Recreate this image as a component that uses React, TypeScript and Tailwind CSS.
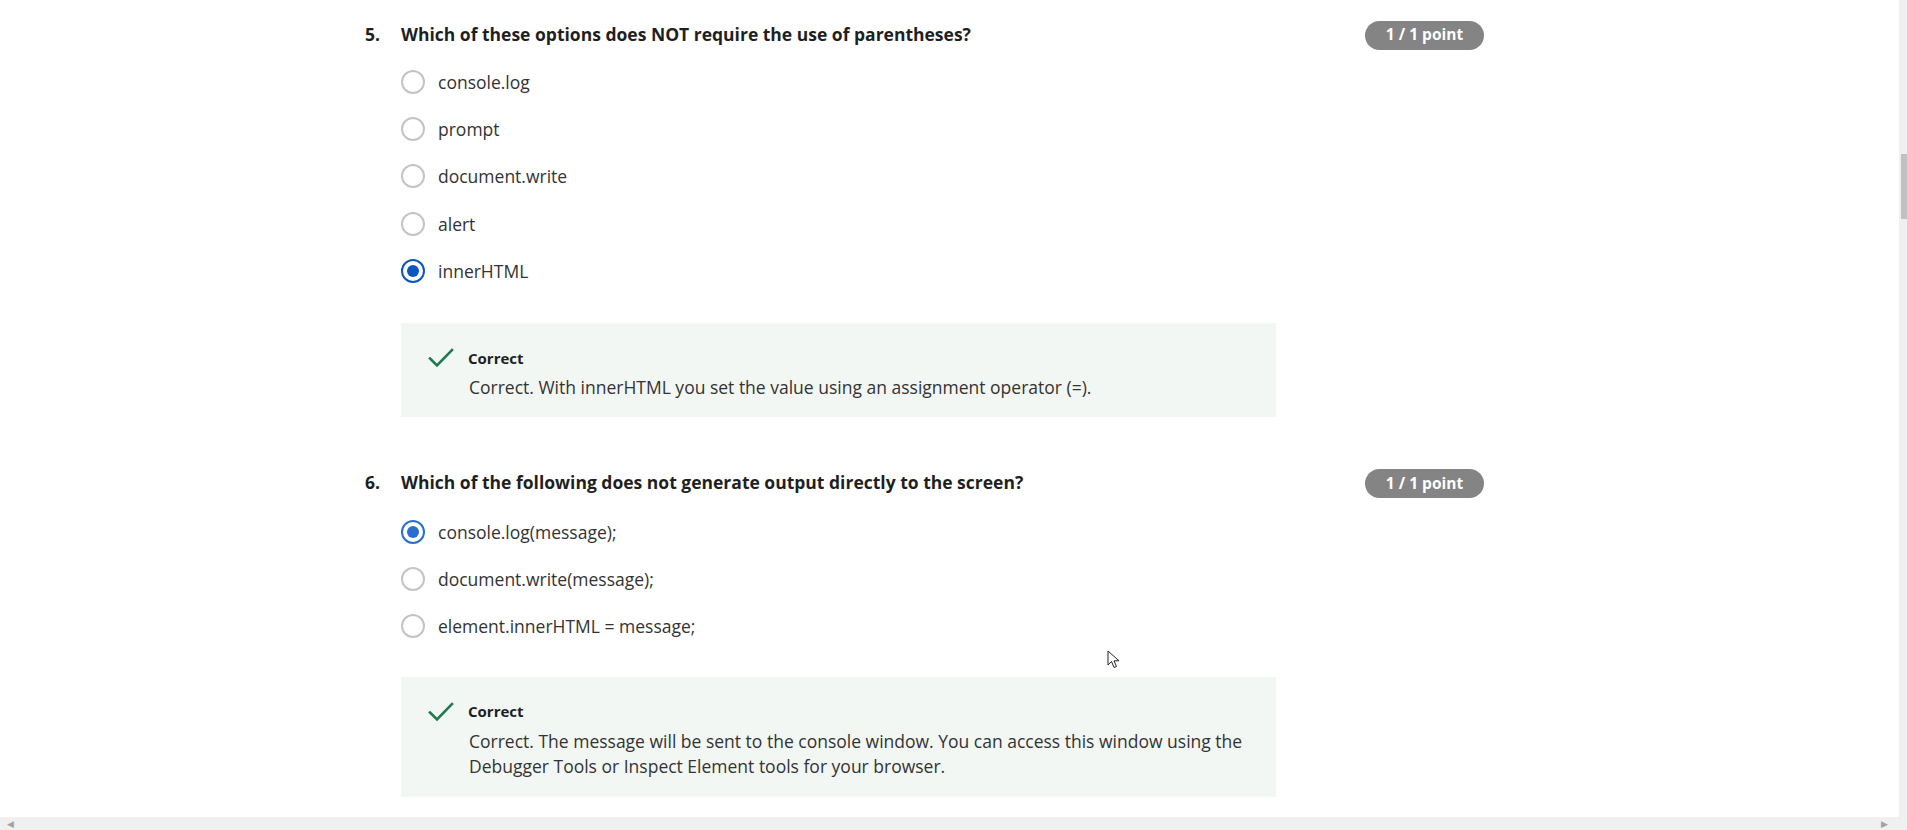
const questions = [
  {
    num: "5.",
    title: "Which of these options does NOT require the use of parentheses?",
    options: ["console.log", "prompt", "document.write", "alert", "innerHTML"],
    selected: 4,
    dark: true,
    feedback: ["Correct. With innerHTML you set the value using an assignment operator (=)."],
  },
  {
    num: "6.",
    title: "Which of the following does not generate output directly to the screen?",
    options: ["console.log(message);", "document.write(message);", "element.innerHTML = message;"],
    selected: 0,
    dark: false,
    feedback: [
      "Correct. The message will be sent to the console window. You can access this window using the",
      "Debugger Tools or Inspect Element tools for your browser.",
    ],
  },
];

function Radio({ checked, dark }: { checked: boolean; dark: boolean }) {
  if (!checked) {
    return <span className="box-border h-[24px] w-[24px] shrink-0 rounded-full border-2 border-[#c4c4c4] bg-white" />;
  }
  return (
    <span
      className={`box-border flex h-[24px] w-[24px] shrink-0 items-center justify-center rounded-full border-2 ${
        dark ? "border-[#0a57c4]" : "border-[#2a6fd0]"
      }`}
    >
      <span className={`h-[12px] w-[12px] rounded-full ${dark ? "bg-[#0a57c4]" : "bg-[#2a6fd0]"}`} />
    </span>
  );
}

function Check() {
  return (
    <svg width="26" height="20" viewBox="0 0 26 20" className="shrink-0">
      <path d="M2 10.5 L9 17.5 L24 2" fill="none" stroke="#1f7a4f" strokeWidth="2.6" strokeLinecap="square" />
    </svg>
  );
}

function Question({ q, first }: { q: (typeof questions)[number]; first?: boolean }) {
  return (
    <div className="w-[1119px]">
      <div className="flex h-[24px] items-center">
        <span className="w-[36px] text-[17.5px] font-bold text-[#1f1f1f]">{q.num}</span>
        <span className="flex-1 text-[17.5px] font-bold text-[#1f1f1f]">{q.title}</span>
        <span className="mt-[2px] flex h-[29px] w-[119px] items-center justify-center rounded-full bg-[#848484] text-[15.5px] font-bold text-white">
          1 / 1 point
        </span>
      </div>
      <div className={`${first ? "mt-[12px]" : "mt-[13.5px]"} pl-[36px]`}>
        {q.options.map((opt, i) => (
          <div key={opt} className="flex h-[47.4px] items-center gap-[13px]">
            <Radio checked={i === q.selected} dark={q.dark} />
            <span className="text-[17.5px] text-[#333]">{opt}</span>
          </div>
        ))}
      </div>
      <div className={`ml-[36px] ${first ? "mt-[28px]" : "mt-[26.5px]"} w-[875px] bg-[#f2f7f4] pb-[17px] pl-[27px] pt-[25px]`}>
        <div className="flex h-[20px] items-center gap-[14px]">
          <Check />
          <span className="text-[15px] font-bold text-[#1f1f1f]">Correct</span>
        </div>
        <div className="mt-[7px] pl-[41px] text-[17.5px] leading-[25.5px] text-[#333]">
          {q.feedback.map((line) => (
            <div key={line}>{line}</div>
          ))}
        </div>
      </div>
    </div>
  );
}

export default function App() {
  return (
    <div className="relative flex h-[830px] w-[1907px] flex-col overflow-hidden bg-white font-['Open_Sans',sans-serif]">
      <div className="flex flex-1">
        <div className="flex-1 pl-[365px] pt-[22px]">
          <Question q={questions[0]} first />
          <div className="h-[53px]" />
          <Question q={questions[1]} />
        </div>
        <div className="flex w-[8px] flex-col bg-[#f0f0f0]">
          <div className="h-[154px]" />
          <div className="ml-[2px] h-[65px] w-[6px] bg-[#c1c1c1]" />
        </div>
      </div>
      <div className="flex h-[13px] items-center justify-between bg-[#f0f0f0] px-[7px]">
        <span className="text-[9px] leading-none text-[#a3a3a3]">◀</span>
        <span className="mr-[12px] text-[9px] leading-none text-[#a3a3a3]">▶</span>
      </div>
      <svg className="absolute left-[1107px] top-[650px]" width="14" height="20" viewBox="0 0 14 20">
        <path d="M1 1 L1 15 L4.5 11.5 L7 17.5 L9.5 16.5 L7 10.8 L12 10.8 Z" fill="white" stroke="#222" strokeWidth="1" />
      </svg>
    </div>
  );
}
